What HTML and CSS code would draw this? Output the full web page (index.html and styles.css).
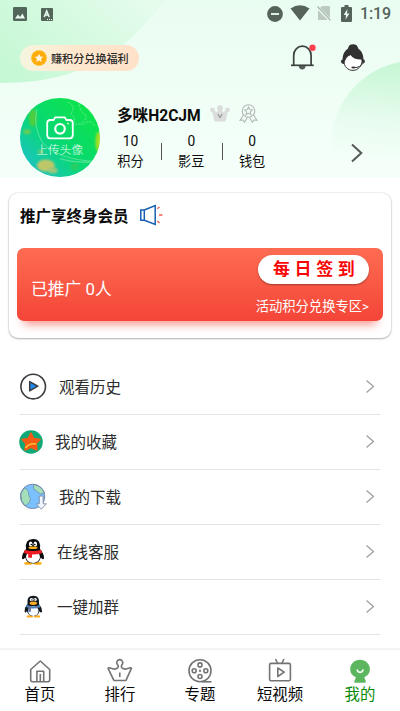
FILE: index.html
```html
<!DOCTYPE html>
<html lang="zh-CN">
<head>
<meta charset="utf-8">
<title>我的</title>
<link rel="stylesheet" href="styles.css">
</head>
<body>
<div class="app">
  <header class="hero">
    <svg class="hero-bg" viewBox="0 0 400 178" preserveAspectRatio="none" aria-hidden="true">
      <defs>
        <linearGradient id="base" x1="0" y1="0" x2="0" y2="1"><stop offset="0" stop-color="#eafdf1"/><stop offset="1" stop-color="#f5fffa"/></linearGradient>
        <linearGradient id="left" x1="0" y1=".7" x2="1" y2=".2"><stop offset="0" stop-color="#c6f8d5"/><stop offset="1" stop-color="#e5fced"/></linearGradient>
        <linearGradient id="right" gradientUnits="userSpaceOnUse" x1="375" y1="65" x2="365" y2="160"><stop offset="0" stop-color="#c8f7d6"/><stop offset=".6" stop-color="#e9fcf0"/><stop offset="1" stop-color="#f4fff9"/></linearGradient>
      </defs>
      <rect width="400" height="178" fill="url(#base)"/>
      <path d="M0 0H165C143 29 118 55 85 68C55 80 28 83 0 83Z" fill="url(#left)"/>
      <path d="M400 62C370 68 347 88 336 116C329 137 331 160 345 178H400Z" fill="url(#right)"/>
    </svg>
    <div class="status">
      <svg width="14" height="14" viewBox="0 0 14 14"><rect width="14" height="14" rx="1.3" fill="#53665a"/><path d="M2 11.5L5 7.5L7 10L9.5 6.5L12 11.5Z" fill="#eafdf0"/></svg>
      <svg class="lang" width="12" height="13" viewBox="0 0 12 13"><rect width="12" height="13" rx="1" fill="#53665a"/><path d="M3.2 9L5.7 3L8.2 9M4.2 7H7.3" fill="none" stroke="#eafdf0" stroke-width="1.5"/><path d="M6 11.5H11" stroke="#eafdf0" stroke-dasharray="1 1"/></svg>
      <div class="status-right">
        <svg width="16" height="16" viewBox="0 0 16 16"><circle cx="8" cy="8" r="7.9" fill="#56635b"/><path d="M4 8H12" stroke="#effff5" stroke-width="1.8"/></svg>
        <svg width="20" height="16" viewBox="0 0 20 16"><path d="M.5 3.5Q10-3 19.5 3.5L10 15.5Z" fill="#56635b"/></svg>
        <svg width="14" height="15" viewBox="0 0 14 15"><path d="M5 0H12Q13 0 13 1V14H1V4Z" fill="#bdcac2"/><path d="M0 .8L13.5 14.8" stroke="#edfdf3" stroke-width="3"/><path d="M.5 .5L13.5 14.3" stroke="#a9b6ae" stroke-width="1.2"/></svg>
        <svg width="11" height="17" viewBox="0 0 11 17"><path d="M3.5 0H7.5V2H10Q11 2 11 3V16Q11 17 10 17H1Q0 17 0 16V3Q0 2 1 2H3.5Z" fill="#56635b"/><path d="M6.4 4L2.7 10H5L4.6 14.5L8.4 8.4H6Z" fill="#effff5"/></svg>
        <span class="clock">1:19</span>
      </div>
    </div>
    <div class="tools">
      <a class="reward">
        <svg width="16" height="16" viewBox="0 0 16 16"><circle cx="8" cy="8" r="7.8" fill="#fdb10c"/><circle cx="8" cy="8" r="5.6" fill="#ffa90a"/><path d="M8 3.7L9.3 6.4L12.3 6.8L10.1 8.9L10.7 11.9L8 10.4L5.3 11.9L5.9 8.9L3.7 6.8L6.7 6.4Z" fill="#fff5dc"/></svg>
        <span>赚积分兑换福利</span>
      </a>
      <svg class="bell" width="26" height="28" viewBox="0 0 26 28"><g fill="none" stroke="#3b423e" stroke-width="1.7"><path d="M3.7 21V11.5A8.7 9.3 0 0 1 21.1 11.5V21"/><path d="M1 21.3H23.7"/></g><path d="M8.6 22H15.7Q15 25.5 12.2 25.5T8.6 22" fill="#555c58"/><circle cx="22.5" cy="3.8" r="3.2" fill="#ff4050"/></svg>
      <svg class="agent" width="26" height="28" viewBox="0 0 26 28"><path d="M3.5 16C4 23 8 26.4 13 26.4S22 22 22.2 16L20 12L12 10L6 12Z" fill="#fff" stroke="#333" stroke-width="1"/><path d="M8 4.6Q8.5 .2 13 .2T18.2 4.6Q23.5 8.5 23.4 15.3Q26 16.5 24.2 19L22.6 20L21.6 15.5Q14 15.8 10.4 11Q5.6 12.5 4.2 20Q.8 20 1 16.5L2.5 15.4Q2.8 8 8 4.6Z" fill="#303130"/><path d="M22.6 19.5Q20.5 23.5 14 23.7" fill="none" stroke="#333"/><ellipse cx="13.3" cy="23.5" rx="2" ry="1" fill="#333"/></svg>
    </div>
    <div class="profile">
      <div class="avatar">
        <svg class="avatar-art" viewBox="0 0 80 80" aria-hidden="true">
          <defs><linearGradient id="av" x1="0" y1=".9" x2=".8" y2=".1"><stop offset="0" stop-color="#20bfd0"/><stop offset=".5" stop-color="#08d874"/><stop offset="1" stop-color="#0de34c"/></linearGradient><filter id="soft" x="-20%" y="-20%" width="140%" height="140%"><feGaussianBlur stdDeviation="1.2"/></filter></defs>
          <rect width="80" height="80" fill="url(#av)"/>
          <g filter="url(#soft)"><ellipse cx="13" cy="20" rx="4" ry="9" fill="#4cce3f"/><ellipse cx="7" cy="34" rx="4" ry="2.5" fill="#68ce55"/><ellipse cx="26" cy="68" rx="9" ry="6" fill="#bdc768"/><ellipse cx="33" cy="73" rx="5" ry="3" fill="#9bc77a"/><ellipse cx="21" cy="54" rx="2.5" ry="2" fill="#8ac965"/><ellipse cx="79" cy="44" rx="3" ry="10" fill="#a7dd22"/><ellipse cx="55" cy="69" rx="4" ry="4" fill="#25cf64"/></g>
          <g fill="none" stroke="#8af0ad" stroke-width=".8" opacity=".75"><path d="M17 11Q13 28 22 44Q36 62 78 64"/><path d="M48 4Q57 8 51 16Q59 22 51 28M62 25Q69 20 65 16Q60 14 59 3M52 30Q57 24 63 27Q71 20 75 28" stroke-dasharray="3 1"/></g>
          <path d="M40 61Q57 66 78 64" fill="none" stroke="#7de7b0" stroke-width="1.5" opacity=".6"/>
        </svg>
        <div class="upload">
          <svg width="28" height="24" viewBox="0 0 28 24" fill="none" stroke="#fff"><path d="M4.5 4H7.5L9.3 1.3H18.7L20.5 4H23.5Q26.8 4 26.8 7V19Q26.8 22.3 23.5 22.3H4.5Q1.2 22.3 1.2 19V7Q1.2 4 4.5 4Z" stroke-width="1.8"/><circle cx="14" cy="12.8" r="4.8" stroke-width="2.2"/><circle cx="22" cy="7.6" r=".5"/></svg>
          <span>上传头像</span>
        </div>
      </div>
      <div class="who">
        <div class="name-row">
          <strong>多咪H2CJM</strong>
          <svg class="crown" width="20" height="17" viewBox="0 0 20 17"><g fill="#dadddb"><circle cx="2.5" cy="5" r="2.4"/><circle cx="10" cy="3" r="2.8"/><circle cx="17.5" cy="5" r="2.4"/><path d="M2 5L7 7L10 2L13 7L18 5L16 15Q15.7 16.5 14 16.5H6Q4.3 16.5 4 15Z"/></g><path d="M7.8 9L10 12.5L12.2 9" fill="none" stroke="#999c9a" stroke-width="1.3"/></svg>
          <svg class="medal" width="19" height="19" viewBox="0 0 19 19" fill="none" stroke="#b4bab6" stroke-width="1.1"><circle cx="9.5" cy="7" r="6.3"/><path d="M9.5 3.1L10.7 5.6L13.4 6L11.4 7.9L11.9 10.6L9.5 9.3L7.1 10.6L7.6 7.9L5.6 6L8.3 5.6Z"/><path d="M4.5 11L1 16.4L4.1 16L5.6 18.3L8.4 13.5M14.5 11L18 16.4L14.9 16L13.4 18.3L10.6 13.5"/></svg>
        </div>
        <div class="stats">
          <div class="stat"><b>10</b><span>积分</span></div><i></i>
          <div class="stat"><b>0</b><span>影豆</span></div><i></i>
          <div class="stat"><b>0</b><span>钱包</span></div>
        </div>
      </div>
      <svg class="go" width="14" height="20" viewBox="0 0 14 20"><path d="M2 1.5L11.3 10L2 18.5" fill="none" stroke="#555b57" stroke-width="2"/></svg>
    </div>
  </header>

  <section class="promo">
    <div class="promo-head">
      <h2>推广享终身会员</h2>
      <svg width="24" height="22" viewBox="0 0 24 22" fill="none"><path d="M1.8 6H5.3V16.3H1.8ZM5.3 6L16.2 1.5V20.5L5.3 16.3" stroke="#165fb4" stroke-width="1.5"/><path d="M18.3 4.8L20.5 3M20 11H23.3M18.3 17L20.5 19" stroke="#f35a4c" stroke-width="1.4"/></svg>
    </div>
    <div class="banner">
      <span class="count">已推广 0人</span>
      <div class="banner-side">
        <a class="sign">每日签到</a>
        <a class="zone">活动积分兑换专区&gt;</a>
      </div>
    </div>
  </section>

  <main class="menu">
    <a class="row">
      <svg width="28" height="28" viewBox="0 0 28 28"><circle cx="13.2" cy="13.6" r="12.3" fill="#fff" stroke="#3c3c3e" stroke-width="1.6"/><path d="M9.7 8.6L17.8 13.2L9.7 17.8Z" fill="#2188ed" stroke="#3c3c3e" stroke-width="1.5" stroke-linejoin="round"/></svg>
      <span>观看历史</span>
      <svg class="arrow" width="10" height="15" viewBox="0 0 10 15"><path d="M1.5 1.5L8.5 7.5L1.5 13.5"/></svg>
    </a>
    <a class="row">
      <svg class="fav" width="24" height="24" viewBox="0 0 24 24"><circle cx="12" cy="12" r="11.8" fill="#0fa977"/><path d="M12 3L14.8 8.5L21 9.5L17.2 13.6L18 20L12 17.4L6 20L6.8 13.6L3 9.5L9.2 8.5Z" fill="#f45b15" stroke="#f45b15" stroke-width="1.5" stroke-linejoin="round"/><path d="M6.5 18Q10 12.8 17.3 14" fill="none" stroke="#ffc238" stroke-width="1.4"/></svg>
      <span>我的收藏</span>
      <svg class="arrow" width="10" height="15" viewBox="0 0 10 15"><path d="M1.5 1.5L8.5 7.5L1.5 13.5"/></svg>
    </a>
    <a class="row">
      <svg width="28" height="28" viewBox="0 0 28 28"><circle cx="12.6" cy="13.4" r="12.2" fill="#7bc0ff"/><path d="M4 5Q9.5 7 8.5 11.5Q11.8 16 9.5 19.5L5.2 23Q0 18 .8 11ZM13.5 1.5Q12.5 6.5 16.5 8L20.5 11L24.4 10Q22.5 3 13.5 1.5Z" fill="#a5dfb9" stroke="#6a91ac" stroke-width=".8"/><circle cx="12.6" cy="13.4" r="12.2" fill="none" stroke="#7481a2" stroke-width=".9"/><path d="M19.3 13H23.2V20.8H26.4L21.3 26.2L16.2 20.8H19.3Z" fill="#f2f5ff" stroke="#808da4" stroke-width=".9"/></svg>
      <span>我的下载</span>
      <svg class="arrow" width="10" height="15" viewBox="0 0 10 15"><path d="M1.5 1.5L8.5 7.5L1.5 13.5"/></svg>
    </a>
    <a class="row">
      <svg width="26" height="28" viewBox="0 0 26 28"><ellipse cx="8.3" cy="25.4" rx="4.2" ry="1.3" fill="#ffae12"/><ellipse cx="17.7" cy="25.4" rx="4.2" ry="1.3" fill="#ffae12"/><path d="M6 11Q4.8 1.3 13 1.1T20 11Q24.3 16 24 20.5Q23 22.5 20.8 19.5Q19.5 25.4 13 25.4T5.2 19.5Q3 22.5 2 20.5Q1.7 16 6 11Z" fill="#080c0e"/><ellipse cx="13" cy="19" rx="7" ry="6" fill="#fff"/><ellipse cx="10.7" cy="6.1" rx="1.8" ry="2.5" fill="#fff"/><ellipse cx="15.3" cy="6.1" rx="1.8" ry="2.5" fill="#fff"/><circle cx="11.3" cy="6.5" r=".8"/><circle cx="14.8" cy="6.5" r=".8"/><ellipse cx="13" cy="9.8" rx="4.6" ry="1.3" fill="#ffb51a"/><path d="M4.8 11.8Q13 14.4 21.2 11.8L22 15.2Q17 16.6 12 16.5V19.7H8.2V16.2L4 15Z" fill="#ed1d24"/></svg>
      <span>在线客服</span>
      <svg class="arrow" width="10" height="15" viewBox="0 0 10 15"><path d="M1.5 1.5L8.5 7.5L1.5 13.5"/></svg>
    </a>
    <a class="row">
      <svg width="26" height="28" viewBox="0 0 26 28"><ellipse cx="9.8" cy="23.4" rx="3.2" ry="1.2" fill="#ffad1f"/><ellipse cx="17" cy="23.4" rx="3.2" ry="1.2" fill="#ffad1f"/><path d="M7.5 11Q6.3 2.9 13.2 2.8T19 11Q22.3 15 22.1 18.8Q21 20.5 19.5 18.2Q18.5 23 13.3 23T7 18.2Q5 20.6 4.6 18.6Q4.4 14.5 7.5 11Z" fill="#111820"/><ellipse cx="13.3" cy="18" rx="5.2" ry="4.9" fill="#f7fbff"/><circle cx="11.5" cy="6.6" r="1.7" fill="#fff"/><circle cx="15.1" cy="6.6" r="1.7" fill="#fff"/><circle cx="11.9" cy="6.9" r=".7"/><circle cx="14.7" cy="6.9" r=".7"/><ellipse cx="13.3" cy="10.2" rx="3.7" ry="1.7" fill="#ffb122"/><path d="M6.6 11.8Q13.3 14.8 20 11.8L20.3 14.2Q14 15.9 11.2 15.2L10.4 19.3L8.4 18.7V14.7L6.3 14Z" fill="#4a86b8"/><path d="M10 13V18.2M16.5 13V15.2" stroke="#ad4e70" stroke-width=".8"/></svg>
      <span>一键加群</span>
      <svg class="arrow" width="10" height="15" viewBox="0 0 10 15"><path d="M1.5 1.5L8.5 7.5L1.5 13.5"/></svg>
    </a>
  </main>

  <nav class="tabs">
    <a><svg width="26" height="26" viewBox="0 0 26 26"><path d="M3.7 11.5L13.3 3L22.7 11.5V21.5Q22.7 23.8 20.5 23.8H5.9Q3.7 23.8 3.7 21.5ZM9.9 23.6V13.2H16.7V23.6M13.3 16V23.6"/></svg><span>首页</span></a>
    <a><svg width="26" height="26" viewBox="0 0 26 26"><path d="M6.5 21.7L1.2 10.7Q.9 9.6 2 9.7L7.7 11.2L10.5 10Q11.8 8.9 10.9 7.2Q8.7 4.7 10.5 2.7Q12.7 .7 14.9 2.7Q16.8 4.7 14.7 7.2Q13.9 8.9 15.1 10L18 11.2L23.5 9.7Q24.7 9.6 24.3 10.7L19.3 21.7Q19 22.5 18.3 22.5H7.6Q6.8 22.5 6.5 21.7ZM12.8 14.5V19"/></svg><span>排行</span></a>
    <a><svg width="26" height="26" viewBox="0 0 26 26"><circle cx="13" cy="12.7" r="11"/><circle cx="13" cy="6.9" r="2"/><circle cx="7.2" cy="12.7" r="2"/><circle cx="18.8" cy="12.7" r="2"/><circle cx="13" cy="18.5" r="2"/><circle cx="13" cy="12.7" r=".4"/><path d="M15 23.8H24.5"/></svg><span>专题</span></a>
    <a><svg width="26" height="26" viewBox="0 0 26 26"><rect x="2.6" y="5.4" width="20.8" height="17.4" rx="1.5"/><path d="M8.5 1L10.5 5M17 1L15 5M10.8 10V18.5L17.2 14.2Z"/></svg><span>短视频</span></a>
    <a class="active"><svg width="26" height="26" viewBox="0 0 26 26"><path d="M13 1.8C18.5 1.8 22.9 6 22.9 11.2C22.9 14.8 21 17.5 17.3 19.2L18.9 23.4Q19 24.8 17.8 24.8H8.3Q7.1 24.8 7.3 23.4L8.9 19.2C5 17.5 3.2 14.8 3.2 11.2C3.2 6 7.5 1.8 13 1.8Z"/><path class="smile" d="M10.3 12Q10.6 14.3 13.1 14.3T15.9 12"/></svg><span>我的</span></a>
  </nav>
</div>
</body>
</html>
```

FILE: styles.css
```css
* { box-sizing: border-box; }
body { margin: 0; background: #fff; color: #0c0c0c; font-family: Roboto, "Noto Sans CJK SC", sans-serif; }
svg { display: block; flex: none; }
.app { width: 400px; height: 711px; display: flex; flex-direction: column; overflow: hidden; }

.hero { position: relative; height: 178px; isolation: isolate; flex: none; }
.hero-bg { position: absolute; inset: 0; width: 100%; height: 100%; z-index: -1; }
.status { height: 28px; display: flex; align-items: center; padding: 0 9px 0 13px; }
.lang { margin-left: 14px; }
.status-right { margin-left: auto; display: flex; align-items: center; gap: 7px; }
.status-right svg:nth-child(2) { margin-top: -3px; }
.status-right svg:nth-child(3) { margin-top: -2px; }
.status-right svg:nth-child(4) { margin-left: 3px; margin-top: -2px; }
.clock { color: #56635b; font-size: 16px; line-height: 20px; font-weight: 500; letter-spacing: -.15px; margin-left: 1px; }
.tools { display: flex; align-items: center; padding: 0 34px 0 20px; height: 60px; }
.reward { display: flex; align-items: center; gap: 4px; width: 119px; height: 26px; padding-left: 11px; border-radius: 13px; background: linear-gradient(90deg, #f5f5df, #ffe8ce 45%, #ffe1c8); font-size: 11.1px; font-weight: 500; color: #292929; white-space: nowrap; }
.bell { margin-left: auto; margin-right: 24px; }
.profile { display: flex; height: 90px; padding: 9.5px 36px 0 20px; }
.avatar { position: relative; width: 79.5px; height: 79.5px; border-radius: 50%; overflow: hidden; }
.avatar-art { width: 100%; height: 100%; }
.upload { position: absolute; inset: 18px 0 0; display: flex; flex-direction: column; align-items: center; color: #e3ffef; font-size: 11.7px; line-height: 16px; font-weight: 300; }
.upload span { margin-top: 2px; }
.who { margin-left: 17.5px; }
.name-row { display: flex; align-items: center; height: 35px; }
.name-row strong { font-size: 15.6px; line-height: 24px; white-space: nowrap; padding-top: 1px; }
.crown { margin-left: 9px; margin-top: -3px; }
.medal { margin-left: 9px; margin-top: -3px; }
.stats { display: flex; align-items: center; height: 38px; }
.stat { width: 27px; display: flex; flex-direction: column; align-items: center; white-space: nowrap; }
.stat b { font-size: 13.8px; line-height: 20px; font-weight: 400; }
.stat span { font-size: 13.2px; line-height: 20px; padding-top: 1px; }
.stats i { width: 1px; height: 17px; margin: 0 16px 0 16.8px; background: #555; }
.go { margin-left: auto; margin-top: 45px; }

.promo { flex: none; width: 382px; height: 145px; margin: 15px 9px 0; padding: 0 8px; border-radius: 9px; background: #fff; box-shadow: 0 0 2px #0003, 0 1px 2px #0004; }
.promo-head { display: flex; align-items: center; height: 55px; padding: 0 0 11px 3px; }
h2 { margin: 0 10px 0 0; padding-top: 3px; font-size: 15.5px; line-height: 24px; font-weight: 700; }
.banner { height: 73px; display: flex; justify-content: space-between; padding: 7px 14px 0 15px; border-radius: 7px; background: linear-gradient(#fe6c52, #f44538); box-shadow: 0 10px 9px -7px #f4453899; color: #fff; }
.count { margin: 21px 0 0 -1px; font-size: 16.8px; line-height: 26px; }
.banner-side { display: flex; flex-direction: column; align-items: flex-end; }
.sign { width: 111px; height: 29px; border-radius: 15px; background: #fff; color: #f80606; font-size: 17px; line-height: 29px; font-weight: 700; letter-spacing: 4.6px; padding-left: 15px; white-space: nowrap; box-shadow: 0 1px 2px #0005; }
.zone { margin-top: 13px; font-size: 13.3px; line-height: 20px; white-space: nowrap; }

.menu { flex: 1; padding: 22px 20px 0; }
.row { display: flex; align-items: center; height: 55px; border-bottom: 1.5px solid #e4e4e4; color: #2d2d2d; font-size: 15.5px; }
.row span { margin-left: 11px; padding-top: 2px; line-height: 24px; }
.row .fav { margin-left: -1px; }
.row .fav + span { margin-left: 12px; }
.arrow { margin-left: auto; margin-right: 5px; margin-top: -1px; fill: none; stroke: #a0a0a0; stroke-width: 1.3; }

.tabs { flex: none; height: 63px; display: grid; grid-template-columns: repeat(5, 1fr); border-top: 2px solid #f4f4f4; background: #fff; }
.tabs a { display: flex; flex-direction: column; align-items: center; padding-top: 8px; color: #080808; }
.tabs svg { fill: none; stroke: #737373; stroke-width: 1.6; stroke-linejoin: round; }
.tabs span { font-size: 15.4px; line-height: 22px; }
.tabs .active { color: #0a8a0a; }
.active svg { fill: #5cb660; stroke: none; }
.active .smile { fill: none; stroke: #fff; stroke-width: 1.7; stroke-linecap: round; }
```
